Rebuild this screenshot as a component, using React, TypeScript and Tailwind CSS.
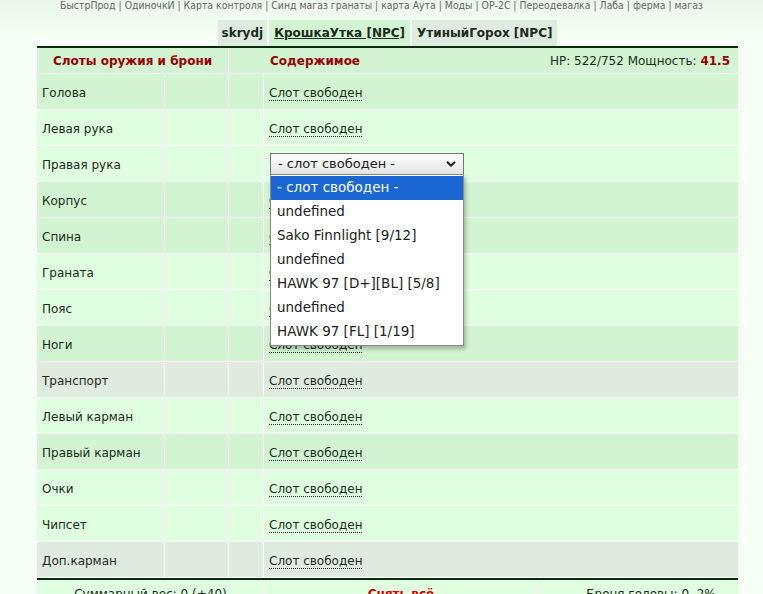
import { ChevronDown } from "lucide-react";

const navLinks = [
  "БыстрПрод",
  "ОдиночкИ",
  "Карта контроля",
  "Синд магаз гранаты",
  "карта Аута",
  "Моды",
  "ОР-2С",
  "Переодевалка",
  "Лаба",
  "ферма",
  "магаз",
];

type Slot = { name: string; tone: "dark" | "light" | "gray"; select?: boolean };

const slots: Slot[] = [
  { name: "Голова", tone: "dark" },
  { name: "Левая рука", tone: "light" },
  { name: "Правая рука", tone: "light", select: true },
  { name: "Корпус", tone: "dark" },
  { name: "Спина", tone: "dark" },
  { name: "Граната", tone: "light" },
  { name: "Пояс", tone: "light" },
  { name: "Ноги", tone: "dark" },
  { name: "Транспорт", tone: "gray" },
  { name: "Левый карман", tone: "light" },
  { name: "Правый карман", tone: "dark" },
  { name: "Очки", tone: "light" },
  { name: "Чипсет", tone: "light" },
  { name: "Доп.карман", tone: "gray" },
];

const options = [
  "- слот свободен -",
  "undefined",
  "Sako Finnlight [9/12]",
  "undefined",
  "HAWK 97 [D+][BL] [5/8]",
  "undefined",
  "HAWK 97 [FL] [1/19]",
];

const toneBg = {
  dark: "bg-[#d3f4d3]",
  light: "bg-[#e0ffe0]",
  gray: "bg-[#e0ebe0]",
};

function SlotRow({ slot }: { slot: Slot }) {
  return (
    <div className={`flex h-[36px] border-b border-white ${toneBg[slot.tone]}`}>
      <div className="flex w-[128px] items-center border-r border-white pl-[5px] pt-[3px]">{slot.name}</div>
      <div className="w-[64px] border-r border-white" />
      <div className="w-[35px] border-r border-white" />
      <div className="relative flex flex-1 items-center pl-[5px]">
        {slot.select ? (
          <div className="relative ml-[1px] w-[194px]">
            <div className="flex h-[22px] items-center justify-between border border-[#767676] bg-gradient-to-b from-white to-[#e4e4e4] pl-[7px] pr-[5px] text-[13px] text-[#222]">
              <span>- слот свободен -</span>
              <ChevronDown size={14} strokeWidth={3.5} className="text-[#1c2a1c]" />
            </div>
            <div className="absolute left-0 top-[21px] z-10 w-[194px] border border-[#8a8a8a] bg-white py-[1px] text-[13.5px] shadow-[2px_3px_4px_rgba(0,0,0,0.25)]">
              {options.map((o, i) => (
                <div
                  key={i}
                  className={`flex h-[24px] items-center pl-[6px] ${i === 0 ? "bg-[#1a66d2] text-white" : "text-[#222]"}`}
                >
                  {o}
                </div>
              ))}
            </div>
          </div>
        ) : (
          <span className="mt-[3px] border-b border-dotted border-[#223322] leading-[14px]">Слот свободен</span>
        )}
      </div>
    </div>
  );
}

export default function App() {
  return (
    <div
      className="min-h-[594px] bg-gradient-to-b from-[#eaf8ea] to-[#f5fff5] to-[40px] text-[12px] text-[#1b2b1b]"
      style={{ fontFamily: '"DejaVu Sans", Verdana, sans-serif' }}
    >
      {/* top links */}
      <div
        className="flex h-[11px] items-center justify-center text-[10.4px] leading-none text-[#666]"
        style={{ fontFamily: '"DejaVu Sans Condensed", "DejaVu Sans", sans-serif' }}
      >
        {navLinks.map((l, i) => (
          <span key={i} className="whitespace-pre">
            {i > 0 && " | "}
            {l}
          </span>
        ))}
      </div>

      <div className="ml-[37px] w-[701px]">
        {/* tabs */}
        <div className="mt-[9px] flex h-[26px] justify-center gap-[2px] font-bold text-[12px] text-[#1b2b1b]">
          <div className="flex items-center bg-[#e0ebe0] px-[4px]">skrydj</div>
          <div className="flex items-center bg-[#d3f4d3] px-[5px]">
            <span className="underline">КрошкаУтка [NPC]</span>
          </div>
          <div className="flex items-center bg-[#e0ebe0] px-[5px]">УтиныйГорох [NPC]</div>
        </div>

        {/* table */}
        <div className="border-t-2 border-[#0d2a0d]">
          <div className="flex h-[26px] border-b border-white bg-[#d3f4d3]">
            <div className="flex w-[192px] items-center justify-center border-r border-white font-bold text-[#990000]">
              Слоты оружия и брони
            </div>
            <div className="flex flex-1 items-center justify-between pl-[41px] pr-[8px]">
              <span className="font-bold text-[#990000]">Содержимое</span>
              <span>
                HP: 522/752 Мощность: <b className="text-[#990000]">41.5</b>
              </span>
            </div>
          </div>
          {slots.map((s) => (
            <SlotRow key={s.name} slot={s} />
          ))}
          <div className="flex h-[30px] border-t-2 border-[#0d2a0d] bg-[#e0ffe0]">
            <div className="flex w-[228px] items-start justify-center border-r border-white pt-[5px]">
              Суммарный вес: 0 (+40)
            </div>
            <div className="flex w-[273px] items-start justify-center border-r border-white pt-[5px] font-bold text-[#cc0000]">
              Снять всё
            </div>
            <div className="flex flex-1 items-start justify-center pl-[26px] pt-[5px]">Броня головы: 0, 2%</div>
          </div>
        </div>
      </div>
    </div>
  );
}
